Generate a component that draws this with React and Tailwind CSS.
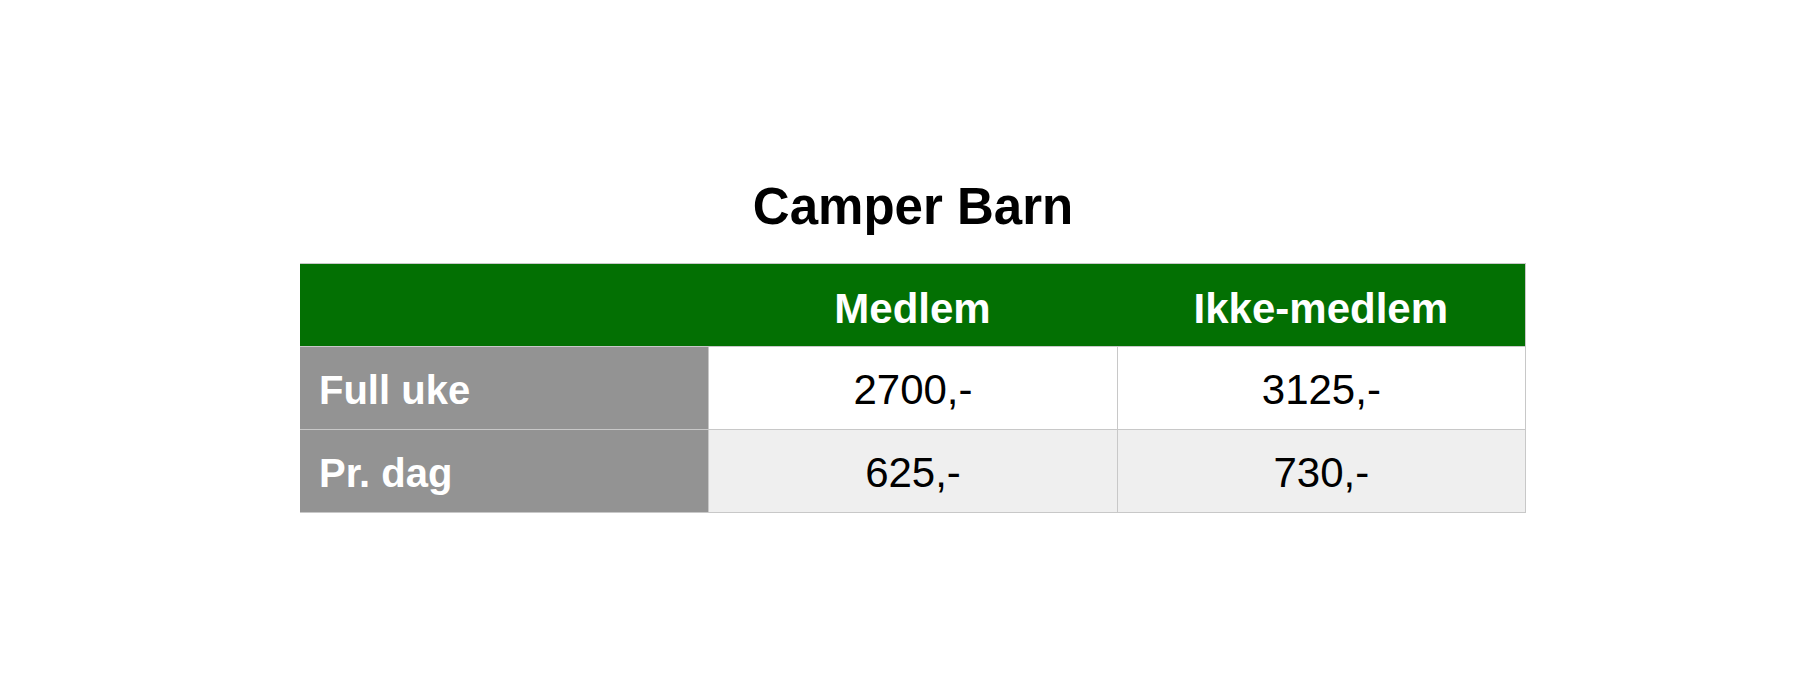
import React from 'react';

const rows = [
  { label: 'Full uke', member: '2700,-', nonMember: '3125,-', bg: 'bg-white' },
  { label: 'Pr. dag', member: '625,-', nonMember: '730,-', bg: 'bg-[#efefef]' },
];

const App = () => {
  return (
    <div className="h-[696px] w-full bg-white flex flex-col items-center pt-[181px] pl-[7px] font-['Liberation_Sans',Arial,sans-serif]">
      <h1 className="text-[51px] leading-none font-bold text-black">Camper Barn</h1>

      <div className="mt-[31px] w-[1226px] border-t border-r border-[#c8c8c8]">
        {/* Header */}
        <div className="grid grid-cols-3 h-[82px] bg-[#037003] text-white font-bold text-[42px] leading-none">
          <div></div>
          <div className="flex items-center justify-center pt-[8px]">Medlem</div>
          <div className="flex items-center justify-center pt-[8px]">Ikke-medlem</div>
        </div>

        {rows.map((r) => (
          <div key={r.label} className={`grid grid-cols-3 h-[83px] border-t border-[#c8c8c8] ${r.bg}`}>
            <div className="bg-[#939393] text-white font-bold text-[40px] leading-none flex items-center pl-[19px] pt-[3px]">
              {r.label}
            </div>
            <div className="border-l border-[#c8c8c8] text-black text-[42px] leading-none flex items-center justify-center pt-[3px]">
              {r.member}
            </div>
            <div className="border-l border-[#c8c8c8] text-black text-[42px] leading-none flex items-center justify-center pt-[3px]">
              {r.nonMember}
            </div>
          </div>
        ))}
        <div className="border-t border-[#c8c8c8]"></div>
      </div>
    </div>
  );
};

export default App;
